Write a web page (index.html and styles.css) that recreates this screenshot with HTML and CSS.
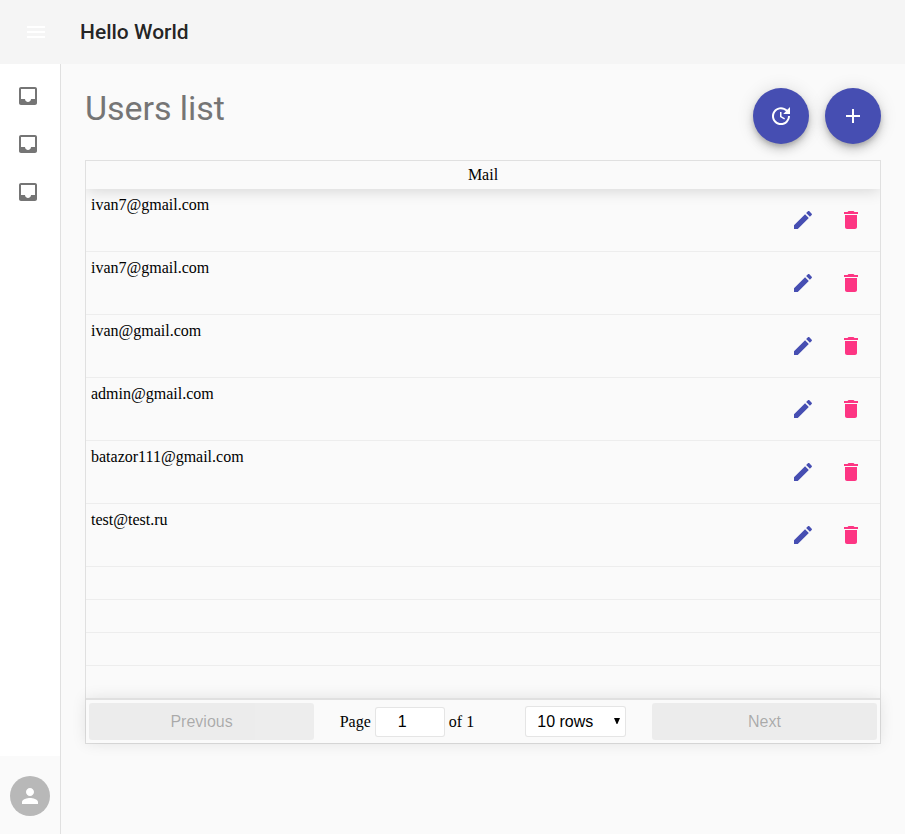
FILE: index.html
```html
<!DOCTYPE html>
<html lang="en">
<head>
<meta charset="utf-8">
<title>Hello World</title>
<link rel="stylesheet" href="styles.css">
</head>
<body>
<svg class="sprite" aria-hidden="true">
  <symbol id="menu" viewBox="0 0 24 24"><path d="M3 18h18v-2H3v2zm0-5h18v-2H3v2zm0-7v2h18V6H3z"/></symbol>
  <symbol id="inbox" viewBox="0 0 24 24"><path d="M19 3H4.99c-1.11 0-1.98.89-1.98 2L3 19c0 1.1.88 2 1.99 2H19c1.1 0 2-.9 2-2V5c0-1.11-.9-2-2-2zm0 12h-4c0 1.66-1.35 3-3 3s-3-1.34-3-3H4.99V5H19v10z"/></symbol>
  <symbol id="update" viewBox="0 0 24 24"><path d="M21 10.12h-6.78l2.74-2.82c-2.73-2.7-7.15-2.8-9.88-.1-2.73 2.71-2.73 7.08 0 9.79 2.73 2.71 7.15 2.71 9.88 0C18.32 15.65 19 14.08 19 12.1h2c0 1.98-.88 4.55-2.64 6.29-3.51 3.48-9.21 3.48-12.72 0-3.5-3.47-3.53-9.11-.02-12.58 3.51-3.47 9.14-3.47 12.65 0L21 3v7.12zM12.5 8v4.25l3.5 2.08-.72 1.21L11 13V8h1.5z"/></symbol>
  <symbol id="add" viewBox="0 0 24 24"><path d="M19 13h-6v6h-2v-6H5v-2h6V5h2v6h6v2z"/></symbol>
  <symbol id="edit" viewBox="0 0 24 24"><path d="M3 17.25V21h3.75L17.81 9.94l-3.75-3.75L3 17.25zM20.71 7.04c.39-.39.39-1.02 0-1.41l-2.34-2.34c-.39-.39-1.02-.39-1.41 0l-1.83 1.83 3.75 3.75 1.83-1.83z"/></symbol>
  <symbol id="delete" viewBox="0 0 24 24"><path d="M6 19c0 1.1.9 2 2 2h8c1.1 0 2-.9 2-2V7H6v12zM19 4h-3.5l-1-1h-5l-1 1H5v2h14V4z"/></symbol>
  <symbol id="person" viewBox="0 0 24 24"><path d="M12 12c2.21 0 4-1.79 4-4s-1.79-4-4-4-4 1.79-4 4 1.79 4 4 4zm0 2c-2.67 0-8 1.34-8 4v2h16v-2c0-2.66-5.33-4-8-4z"/></symbol>
</svg>
<header class="app-bar">
  <svg class="icon menu-icon"><use href="#menu"/></svg>
  <div class="app-title">Hello World</div>
</header>
<div class="layout">
  <nav class="sidebar">
    <div class="nav-list">
      <svg class="icon"><use href="#inbox"/></svg>
      <svg class="icon"><use href="#inbox"/></svg>
      <svg class="icon"><use href="#inbox"/></svg>
    </div>
    <div class="account"><div class="avatar"><svg class="icon"><use href="#person"/></svg></div></div>
  </nav>
  <main class="content">
    <div class="heading">
      <h1>Users list</h1>
      <div class="fabs">
        <button class="fab"><svg class="icon"><use href="#update"/></svg></button>
        <button class="fab"><svg class="icon"><use href="#add"/></svg></button>
      </div>
    </div>
    <section class="table">
      <div class="table-body">
        <div class="table-head">Mail</div>
        <div class="row"><span>ivan7@gmail.com</span><div class="actions"><svg class="icon edit"><use href="#edit"/></svg><svg class="icon delete"><use href="#delete"/></svg></div></div>
        <div class="row"><span>ivan7@gmail.com</span><div class="actions"><svg class="icon edit"><use href="#edit"/></svg><svg class="icon delete"><use href="#delete"/></svg></div></div>
        <div class="row"><span>ivan@gmail.com</span><div class="actions"><svg class="icon edit"><use href="#edit"/></svg><svg class="icon delete"><use href="#delete"/></svg></div></div>
        <div class="row"><span>admin@gmail.com</span><div class="actions"><svg class="icon edit"><use href="#edit"/></svg><svg class="icon delete"><use href="#delete"/></svg></div></div>
        <div class="row"><span>batazor111@gmail.com</span><div class="actions"><svg class="icon edit"><use href="#edit"/></svg><svg class="icon delete"><use href="#delete"/></svg></div></div>
        <div class="row"><span>test@test.ru</span><div class="actions"><svg class="icon edit"><use href="#edit"/></svg><svg class="icon delete"><use href="#delete"/></svg></div></div>
        <div class="row empty"></div>
        <div class="row empty"></div>
        <div class="row empty"></div>
        <div class="row empty"></div>
      </div>
      <div class="pagination">
        <button class="page-button" disabled>Previous</button>
        <div class="page-center">
          <div class="page-info"><span>Page</span><div class="page-input">1</div><span>of 1</span></div>
          <div class="page-size"><span>10 rows</span><svg class="arrow" viewBox="0 0 6 6"><path d="M0 0h6L3.4 6h-.8z"/></svg></div>
        </div>
        <button class="page-button" disabled>Next</button>
      </div>
    </section>
  </main>
</div>
</body>
</html>
```
FILE: styles.css
```css
* { box-sizing: border-box; }
body {
  margin: 0;
  height: 834px;
  overflow: hidden;
  display: flex;
  flex-direction: column;
  background: #fafafa;
  color: #000;
  font: 16px/18px "Liberation Serif", serif;
}
.sprite { display: none; }
.icon { width: 24px; height: 24px; flex: none; display: block; fill: currentColor; }

.app-bar {
  height: 64px;
  flex: none;
  display: flex;
  align-items: center;
  padding-left: 24px;
  background: #f5f5f5;
}
.menu-icon { color: #fff; margin-right: 32px; }
.app-title { font: 500 21px/24px Roboto, sans-serif; color: rgba(0, 0, 0, .87); }

.layout { flex: 1; display: flex; }
.sidebar {
  width: 61px;
  flex: none;
  display: flex;
  flex-direction: column;
  justify-content: space-between;
  background: #fff;
  border-right: 1px solid #e0e0e0;
}
.nav-list {
  display: flex;
  flex-direction: column;
  gap: 24px;
  padding: 20px 16px;
  color: #757575;
}
.account {
  height: 78px;
  padding: 20px 10px;
  background: #fafafa;
}
.avatar {
  width: 40px;
  height: 40px;
  display: flex;
  align-items: center;
  justify-content: center;
  border-radius: 50%;
  background: #b8b8b8;
  color: #fff;
}

.content { flex: 1; padding: 24px; }
.heading { display: flex; justify-content: space-between; height: 72px; }
.heading h1 { margin: 0; font: 400 34px/41px Roboto, sans-serif; letter-spacing: -.05px; color: #757575; }
.fabs { display: flex; gap: 16px; }
.fab {
  width: 56px;
  height: 56px;
  padding: 0;
  border: 0;
  border-radius: 50%;
  display: flex;
  align-items: center;
  justify-content: center;
  color: #fff;
  background: #464eb2;
  box-shadow: 0 3px 5px -1px rgba(0, 0, 0, .2), 0 6px 10px rgba(0, 0, 0, .14), 0 1px 18px rgba(0, 0, 0, .12);
}

.table { border: 1px solid rgba(0, 0, 0, .1); }
.table-body { overflow: hidden; }
.table-head {
  height: 28px;
  padding: 5px;
  text-align: center;
  box-shadow: 0 2px 15px rgba(0, 0, 0, .15);
}
.row {
  height: 63px;
  padding: 7px 5px;
  display: flex;
  justify-content: space-between;
  border-bottom: 1px solid rgba(0, 0, 0, .05);
}
.row.empty { height: 33px; }
.row:last-child { height: 32px; border-bottom: 0; }
.actions { display: flex; gap: 24px; padding: 12px 12px 0 0; }
.edit { color: #464eb2; }
.delete { color: #fd3583; }

.pagination {
  display: flex;
  padding: 3px;
  height: 45px;
  border-top: 2px solid rgba(0, 0, 0, .1);
  box-shadow: 0 0 15px rgba(0, 0, 0, .1);
}
.page-button {
  flex: 1;
  width: 0;
  padding: 0;
  border: 0;
  border-radius: 3px;
  font: 16px "Liberation Sans", sans-serif;
  color: rgba(0, 0, 0, .6);
  background: rgba(0, 0, 0, .1);
  opacity: .5;
}
.page-center {
  flex: 1.5;
  display: flex;
  justify-content: space-around;
}
.page-info { display: flex; align-items: center; gap: 4px; white-space: nowrap; }
.page-input, .page-size {
  font: 16px/18px "Liberation Sans", sans-serif;
  background: #fff;
  border: 1px solid rgba(0, 0, 0, .1);
  border-radius: 3px;
}
.page-input {
  width: 70px;
  height: 30px;
  padding: 5px 15px 5px 0;
  text-align: center;
}
.page-size {
  width: 101px;
  height: 31px;
  margin-top: 3px;
  padding: 6px 5px 4px 11px;
  display: flex;
  justify-content: space-between;
}
.arrow { width: 6px; height: 6px; margin-top: 5px; }
```
